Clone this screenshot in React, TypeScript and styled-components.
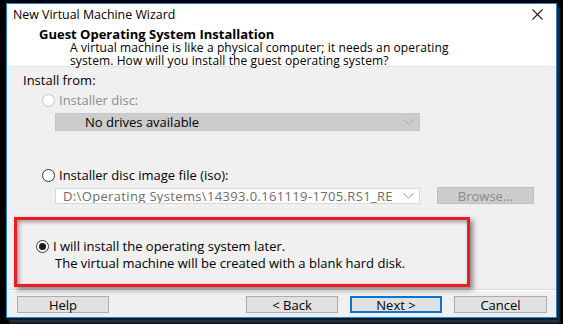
import styled, { createGlobalStyle, css } from 'styled-components';

const GlobalStyle = createGlobalStyle`
  html, body {
    margin: 0;
    padding: 0;
    background: #000;
  }
  body {
    font-family: 'Open Sans', 'Noto Sans', sans-serif;
    font-size: 13px;
    color: #000;
  }
`;

const Chevron = ({ color }: { color: string }) => (
  <svg width="11" height="6" viewBox="0 0 11 6">
    <polyline points="0.5,0.5 5.5,5 10.5,0.5" fill="none" stroke={color} strokeWidth="1" />
  </svg>
);

const App = () => {
  return (
    <>
      <GlobalStyle />
      <Page>
        <Window>
          <TitleBar>
            <span>New Virtual Machine Wizard</span>
            <svg width="11" height="11" viewBox="0 0 11 11">
              <path d="M0.5 0.5 L10.5 10.5 M10.5 0.5 L0.5 10.5" stroke="#222" strokeWidth="1.1" />
            </svg>
          </TitleBar>

          <Header>
            <h1>Guest Operating System Installation</h1>
            <p>A virtual machine is like a physical computer; it needs an operating</p>
            <p>system. How will you install the guest operating system?</p>
          </Header>

          <Body>
            <Label>Install from:</Label>

            <RadioRow $disabled $top={6}>
              <Radio $disabled />
              Installer disc:
            </RadioRow>
            <Select $disabled>
              <span>No drives available</span>
              <Chevron color="#a8a8a8" />
            </Select>

            <RadioRow $top={37}>
              <Radio />
              Installer disc image file (iso):
            </RadioRow>
            <PathRow>
              <Select>
                <span>D:\Operating Systems\14393.0.161119-1705.RS1_RE</span>
                <Chevron color="#9a9a9a" />
              </Select>
              <Button $disabled $width={97}>Browse...</Button>
            </PathRow>

            <Highlight>
              <RadioRow $top={0}>
                <Radio $checked />
                I will install the operating system later.
              </RadioRow>
              <Hint>The virtual machine will be created with a blank hard disk.</Hint>
            </Highlight>
          </Body>

          <Footer>
            <Button $width={92}>Help</Button>
            <ButtonGroup>
              <Button $width={92}>&lt; Back</Button>
              <Button $width={92} $default>Next &gt;</Button>
              <Button $width={93}>Cancel</Button>
            </ButtonGroup>
          </Footer>
        </Window>
      </Page>
    </>
  );
};

const Page = styled.div`
  width: 563px;
  height: 324px;
  box-sizing: border-box;
  padding: 3px 0 0 6px;
  background: #000;
  overflow: hidden;
`;

const Window = styled.div`
  width: 551px;
  height: 315px;
  box-sizing: border-box;
  border: 1px solid #1a86dc;
  background: #f0f0f0;
  display: flex;
  flex-direction: column;
  box-shadow: 1px 2px 0 #0b1c2e, 3px 5px 2px #27313d;
`;

const TitleBar = styled.div`
  height: 20px;
  flex: none;
  background: #fff;
  display: flex;
  align-items: center;
  justify-content: space-between;
  padding: 0 13px 0 6px;
  font-size: 12.4px;
  svg {
    margin-top: 1px;
  }
`;

const Header = styled.div`
  height: 43px;
  flex: none;
  box-sizing: border-box;
  background: #fff;
  padding: 3px 0 0 32px;
  border-bottom: 1px solid #e3e3e3;
  h1 {
    margin: 0;
    font-size: 13px;
    font-weight: 700;
    line-height: 14px;
  }
  p {
    margin: 0 0 0 31px;
    font-size: 12px;
    letter-spacing: 0.1px;
    line-height: 13px;
  }
`;

const Body = styled.div`
  flex: 1;
  display: flex;
  flex-direction: column;
  align-items: flex-start;
  padding: 6px 0 0 16px;
  border-bottom: 1px solid #d7d7d7;
  box-shadow: 0 1px 0 #fff;
`;

const Label = styled.div`
  line-height: 14px;
`;

const RadioRow = styled.label<{ $disabled?: boolean; $top: number }>`
  display: flex;
  align-items: center;
  gap: 4px;
  margin: ${(p) => p.$top}px 0 0 19px;
  line-height: 14px;
  color: ${(p) => (p.$disabled ? '#8d8d8d' : '#000')};
`;

const Radio = styled.span<{ $disabled?: boolean; $checked?: boolean }>`
  width: 13px;
  height: 13px;
  box-sizing: border-box;
  border-radius: 50%;
  border: 1px solid ${(p) => (p.$disabled ? '#c4c4c4' : '#333')};
  background: #fff;
  display: flex;
  align-items: center;
  justify-content: center;
  ${(p) =>
    p.$checked &&
    css`
      &::after {
        content: '';
        width: 7px;
        height: 7px;
        border-radius: 50%;
        background: #1a1a1a;
      }
    `}
`;

const Select = styled.div<{ $disabled?: boolean }>`
  width: 365px;
  height: ${(p) => (p.$disabled ? 18 : 16)}px;
  box-sizing: border-box;
  margin-left: ${(p) => (p.$disabled ? 32 : 0)}px;
  margin-top: ${(p) => (p.$disabled ? 6 : 0)}px;
  display: flex;
  align-items: center;
  justify-content: space-between;
  padding: 0 5px 0 ${(p) => (p.$disabled ? 29 : 7)}px;
  background: ${(p) => (p.$disabled ? '#cccccc' : '#fff')};
  border: 1px solid ${(p) => (p.$disabled ? '#c6c6c6' : '#d9d9d9')};
  color: ${(p) => (p.$disabled ? '#000' : '#6d6d6d')};
  letter-spacing: ${(p) => (p.$disabled ? 0 : 0.35)}px;
  line-height: 14px;
  white-space: nowrap;
  overflow: hidden;
`;

const PathRow = styled.div`
  display: flex;
  align-items: center;
  gap: 17px;
  margin: 5px 0 0 32px;
`;

const Highlight = styled.div`
  width: 456px;
  height: 70px;
  box-sizing: border-box;
  margin: 13px 0 0 -9px;
  border: 3px solid #ec1b24;
  padding-top: 19px;
  box-shadow: 3px 3px 5px rgba(0, 0, 0, 0.45), inset 2px 2px 4px rgba(0, 0, 0, 0.35);
`;

const Hint = styled.div`
  margin: 3px 0 0 38px;
  line-height: 14px;
`;

const Footer = styled.div`
  height: 27px;
  flex: none;
  display: flex;
  align-items: flex-start;
  justify-content: space-between;
  padding: 6px 9px 0 10px;
  box-sizing: border-box;
`;

const ButtonGroup = styled.div`
  display: flex;
  gap: 12px;
`;

const Button = styled.button<{ $width: number; $disabled?: boolean; $default?: boolean }>`
  width: ${(p) => p.$width}px;
  height: 17px;
  padding: 0;
  font-family: inherit;
  font-size: 13px;
  line-height: 14px;
  background: ${(p) => (p.$disabled ? '#cccccc' : '#e1e1e1')};
  border: 1px solid ${(p) => (p.$disabled ? '#bfbfbf' : '#adadad')};
  color: ${(p) => (p.$disabled ? '#8a8a8a' : '#000')};
  ${(p) =>
    p.$default &&
    css`
      border: 2px solid #0a74d2;
    `}
`;

export default App;
